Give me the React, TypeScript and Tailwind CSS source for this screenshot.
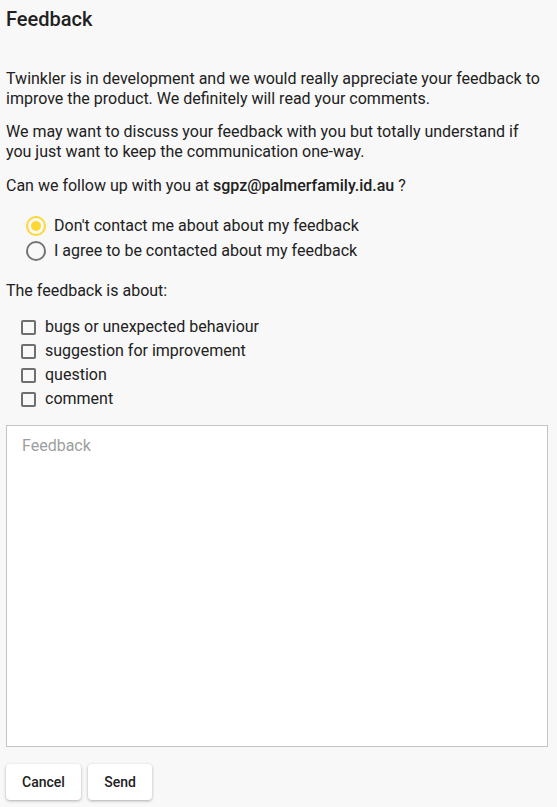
import { useState } from 'react';

const topics = ['bugs or unexpected behaviour', 'suggestion for improvement', 'question', 'comment'];

export default function App() {
    const [contact, setContact] = useState<'no' | 'yes'>('no');
    const [checked, setChecked] = useState<string[]>([]);

    const toggle = (t: string) =>
        setChecked((c) => (c.includes(t) ? c.filter((x) => x !== t) : [...c, t]));

    return (
        <div className="min-h-[807px] bg-[#f8f8f8] px-[6px] text-[16px] leading-[20px] text-[#212121] font-['Roboto',sans-serif]">
            {/* Header */}
            <h1 className="pt-[6px] text-[20px] leading-[26px] font-medium">Feedback</h1>

            <div className="pr-[8px]">
                <p className="mt-[37px]">
                    Twinkler is in development and we would really appreciate your feedback to improve the product. We definitely will read your comments.
                </p>
                <p className="mt-[13px]">
                    We may want to discuss your feedback with you but totally understand if you just want to keep the communication one-way.
                </p>
                <p className="mt-[14px]">
                    Can we follow up with you at <span className="font-medium">sgpz@palmerfamily.id.au</span> ?
                </p>
            </div>

            {/* Contact radios */}
            <div className="mt-[20px] flex flex-col gap-[5px] pl-[20px]">
                {[
                    { v: 'no' as const, label: "Don't contact me about about my feedback" },
                    { v: 'yes' as const, label: 'I agree to be contacted about my feedback' },
                ].map((o) => (
                    <label key={o.v} className="flex items-center gap-[8px] cursor-pointer h-[20px]">
                        <span
                            className={`flex h-[20px] w-[20px] items-center justify-center rounded-full border-2 ${
                                contact === o.v ? 'border-[#fdd835]' : 'border-[#757575]'
                            }`}
                            onClick={() => setContact(o.v)}
                        >
                            {contact === o.v && <span className="h-[10px] w-[10px] rounded-full bg-[#fdd835]" />}
                        </span>
                        <span>{o.label}</span>
                    </label>
                ))}
            </div>

            <p className="mt-[20px]">The feedback is about:</p>

            {/* Topic checkboxes */}
            <div className="mt-[16px] flex flex-col gap-[4px] pl-[15px]">
                {topics.map((t) => (
                    <label key={t} className="flex items-center gap-[9px] h-[20px] cursor-pointer">
                        <span
                            onClick={() => toggle(t)}
                            className={`h-[15px] w-[15px] rounded-[2px] border-2 border-[#6f6f6f] ${
                                checked.includes(t) ? 'bg-[#fdd835]' : 'bg-transparent'
                            }`}
                        />
                        <span>{t}</span>
                    </label>
                ))}
            </div>

            <textarea
                placeholder="Feedback"
                className="mt-[16px] block h-[322px] w-[542px] resize-none border border-[#c4c4c4] bg-white px-[15px] py-[10px] text-[16px] leading-[20px] outline-none placeholder:text-[#9e9e9e]"
            />

            {/* Actions */}
            <div className="mt-[17px] flex gap-[7px] pb-[8px]">
                <button className="h-[36px] w-[75px] rounded-[4px] bg-white text-[14px] font-medium shadow-[0_1px_3px_rgba(0,0,0,0.3)]">
                    Cancel
                </button>
                <button className="h-[36px] w-[64px] rounded-[4px] bg-white text-[14px] font-medium shadow-[0_1px_3px_rgba(0,0,0,0.3)]">
                    Send
                </button>
            </div>
        </div>
    );
}
